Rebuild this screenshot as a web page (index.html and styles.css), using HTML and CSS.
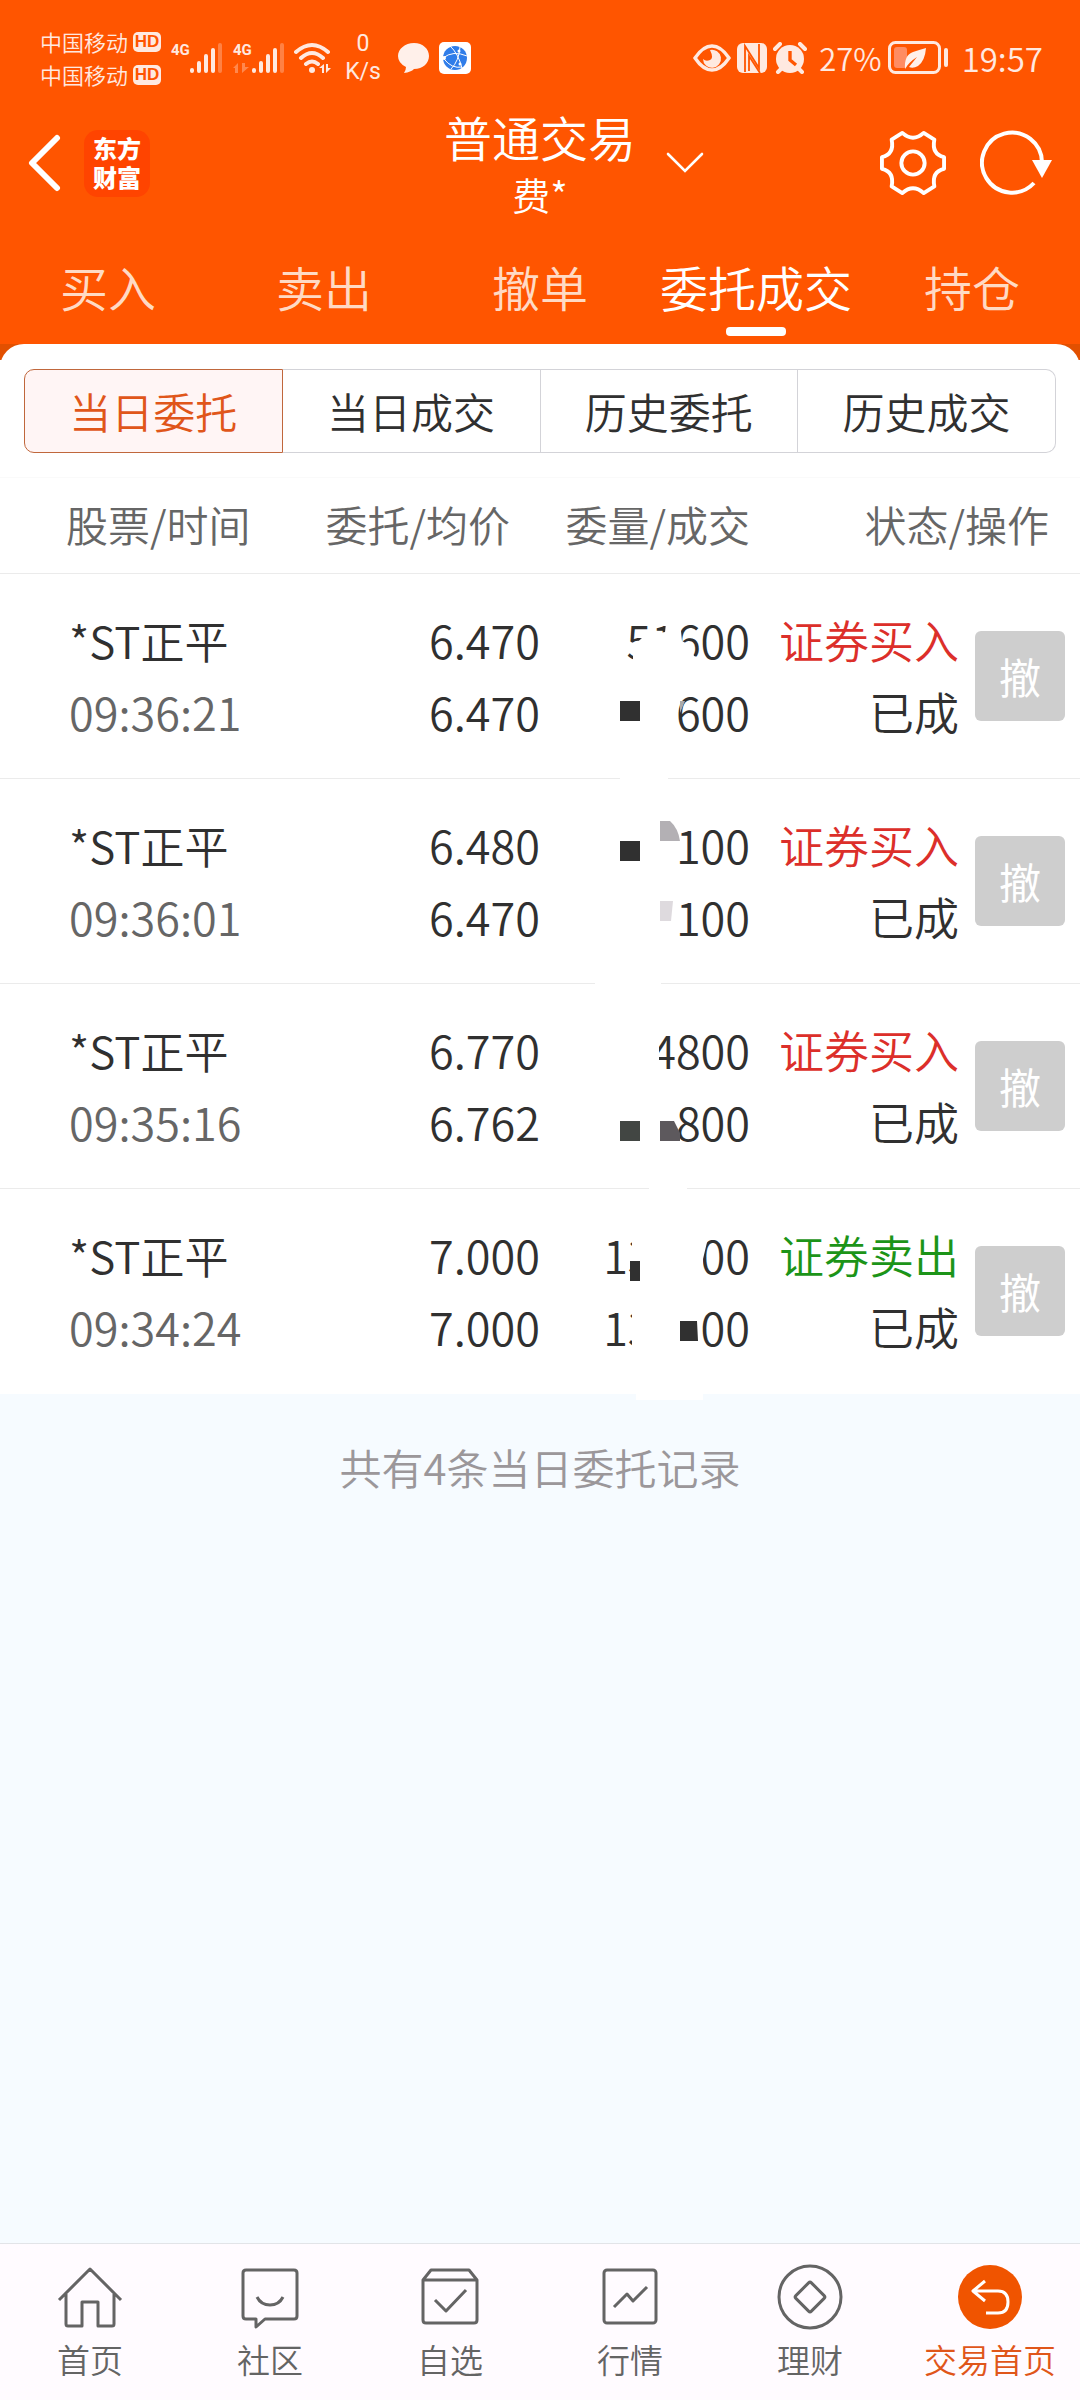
FILE: index.html
```html
<!DOCTYPE html>
<html lang="zh-CN">
<head>
<meta charset="utf-8">
<meta name="viewport" content="width=device-width">
<title>普通交易</title>
<link rel="stylesheet" href="styles.css">
</head>
<body>
<div class="app">
  <header class="header">
    <div class="status">
      <div class="carriers">
        <div class="carrier">中国移动<span class="hd">HD</span></div>
        <div class="carrier">中国移动<span class="hd">HD</span></div>
      </div>
      <div class="signal">
        <span class="gen">4G</span>
        <svg width="34" height="32" viewBox="0 0 34 32" stroke-width="4" stroke-linecap="round" stroke="#ffe9e0"><path d="M3 28v1M10 21v8M17 14v15M24 8v21"/><path d="M31 3v26" stroke-opacity=".3"/></svg>
      </div>
      <div class="signal">
        <span class="gen">4G<svg class="gen-arrows" width="16" height="10" viewBox="0 0 16 10" fill="#ffe9e0" fill-opacity=".35"><path d="M5 0v10H2V5H0zM9 0v10l7-6h-4V0z"/></svg></span>
        <svg width="34" height="32" viewBox="0 0 34 32" stroke-width="4" stroke-linecap="round" stroke="#ffe9e0"><path d="M3 28v1M10 21v8M17 14v15M24 8v21"/><path d="M31 3v26" stroke-opacity=".3"/></svg>
      </div>
      <svg class="wifi" width="38" height="32" viewBox="0 0 38 32" fill="none" stroke="#ffe9e0" stroke-width="4" stroke-linecap="round"><path d="M2 10Q18-4 34 10M7 16Q18 6 29 16M12 22Q18 17 24 22"/><circle cx="18" cy="28" r="3" fill="#ffe9e0" stroke="none"/><path d="M30 22v9h-2v-5h-3zM32 22v9l5-5h-3v-4z" fill="#ffe9e0" stroke="none"/></svg>
      <div class="rate"><span>0</span><span>K/s</span></div>
      <svg class="bubble" width="32" height="30" viewBox="0 0 32 30" fill="#fff0ea"><path d="M16 0c9 0 15 6 15 13s-6 13-15 13q-3 3-10 4 2-3 2-6-8-4-8-11C0 6 7 0 16 0z"/></svg>
      <svg width="32" height="32" viewBox="0 0 32 32"><rect width="32" height="32" rx="5" fill="#fff"/><circle cx="16" cy="16" r="12" fill="#2f7de9"/><path d="M11 4q8 7 12 22M4 16q10-8 24-2M5 17q8 10 18 8M12 27q8-8 9-22" fill="none" stroke="#fff" stroke-width="1"/><circle cx="5" cy="16" r="2" fill="#fff"/><circle cx="20" cy="9" r="1.5" fill="#fff"/><circle cx="21" cy="22" r="1.5" fill="#fff"/></svg>
      <div class="status-right">
        <svg width="38" height="28" viewBox="0 0 38 28"><path d="M2 14Q10 2 19 2t17 12q-8 12-17 12T2 14z" fill="none" stroke="#ffe9e0" stroke-width="3.4"/><path d="M17 6a9 9 0 1 1-7 9q3 3 7 1t0-10z" fill="#ffe9e0"/></svg>
        <svg width="30" height="30" viewBox="0 0 30 30"><rect width="30" height="30" rx="6" fill="#ffe9e0"/><path d="M8 29V3l14 22V1M8 4v25M12 28V13l11 17" fill="none" stroke="#ff5500" stroke-width="1.8"/></svg>
        <svg width="34" height="32" viewBox="0 0 34 32"><circle cx="17" cy="17" r="14" fill="#ffe9e0"/><path d="M2 7l5-5M32 7l-5-5M5 30l4-4M29 30l-4-4" stroke="#ffe9e0" stroke-width="4" stroke-linecap="round"/><path d="M17 9v9l6 5" fill="none" stroke="#ff5500" stroke-width="3.4"/></svg>
        <span class="percent">27%</span>
        <svg width="61" height="34" viewBox="0 0 61 34"><rect x="1.5" y="1.5" width="50" height="30" rx="6" fill="none" stroke="#ffe9e0" stroke-width="3"/><rect x="6" y="6" width="13" height="21" rx="3" fill="#ff8c62"/><path d="M17 28q-1-14 8-17 6-2 13-4-1 13-8 18-5 3-9 1l8-10q-8 5-12 12z" fill="#fff0ea"/><path d="M58 9v15" stroke="#ffe9e0" stroke-width="4" stroke-linecap="round"/></svg>
        <time class="clock">19:57</time>
      </div>
    </div>

    <div class="topbar">
      <div class="topbar-left">
        <button class="icon-button" aria-label="返回"><svg width="34" height="58" viewBox="0 0 34 58" fill="none" stroke="#fff" stroke-width="6" stroke-linecap="round" stroke-linejoin="round"><path d="M29 4L4 29l25 25"/></svg></button>
        <div class="logo">东方<br>财富</div>
      </div>
      <div class="titles"><h1 class="title">普通交易</h1><div class="subtitle">费*</div></div>
      <div class="topbar-right">
        <button class="icon-button" aria-label="切换账户"><svg width="38" height="22" viewBox="0 0 38 22" fill="none" stroke="#fff" stroke-width="2.6" stroke-linecap="round"><path d="M2 2l17 17L36 2"/></svg></button>
        <button class="icon-button push" aria-label="设置"><svg width="66" height="66" viewBox="0 0 68 66" fill="none" stroke="#fff" stroke-width="4" stroke-linejoin="round"><path d="M23 2Q34 12 45 2L56 9Q53 24 66 27V39Q53 42 56 57L45 64Q34 54 23 64L12 57Q15 42 2 39V27Q15 24 12 9Z"/><circle cx="34" cy="33" r="12"/></svg></button>
        <button class="icon-button" aria-label="刷新"><svg width="72" height="66" viewBox="0 0 72 66" fill="none" stroke="#fff" stroke-width="4"><path d="M54 53A30 30 0 1 1 62 33"/><path d="M52 30h20L62 48z" fill="#fff" stroke="none"/></svg></button>
      </div>
    </div>

    <nav class="tabs">
      <a class="tab" href="#">买入</a>
      <a class="tab" href="#">卖出</a>
      <a class="tab" href="#">撤单</a>
      <a class="tab tab-active" href="#" aria-current="page">委托成交</a>
      <a class="tab" href="#">持仓</a>
    </nav>
  </header>

  <main class="main">
    <div class="panel-back">
      <div class="segments">
        <button class="segment segment-active">当日委托</button>
        <button class="segment">当日成交</button>
        <button class="segment">历史委托</button>
        <button class="segment">历史成交</button>
      </div>
    </div>

    <table class="orders">
      <colgroup><col><col class="col-price"><col class="col-amount"><col class="col-state"><col class="col-action"></colgroup>
      <thead>
        <tr><th class="name-head">股票/时间</th><th class="price-head">委托/均价</th><th>委量/成交</th><th class="state-head" colspan="2">状态/操作</th></tr>
      </thead>
      <tbody>
        <tr>
          <td class="name">*ST正平<div class="time">09:36:21</div></td>
          <td>6.470<div>6.470</div></td>
          <td class="amount">51600<div>600</div>
            <svg class="cover" width="210" height="205" viewBox="0 0 210 205"><path fill="#fff" d="M102 64l-9 8h-4v6h4v12h68v-6l-7-2-3-10-9-5-1-10v-8h-15l-1 9-11 2zM80 203h48v3H80z"/><path fill="#303030" d="M80 127h20v20H80z"/><path fill="#aaa" d="M140 127h5l-5 12z"/></svg></td>
          <td><span class="buy">证券买入</span><div>已成</div></td>
          <td class="action"><button class="cancel">撤</button></td>
        </tr>
        <tr>
          <td class="name">*ST正平<div class="time">09:36:01</div></td>
          <td>6.480<div>6.470</div></td>
          <td class="amount">100<div>100</div>
            <svg class="cover" width="210" height="205" viewBox="0 0 210 205"><path fill="#fff" d="M55 203h66v3H55z"/><path fill="#303030" d="M80 62h20v20H80z"/><path fill="#b3b0b4" d="M120 42h10q8 7 10 20h-20z"/><path fill="#dedade" d="M120 122h13l-2 20h-11z"/></svg></td>
          <td><span class="buy">证券买入</span><div>已成</div></td>
          <td class="action"><button class="cancel">撤</button></td>
        </tr>
        <tr>
          <td class="name">*ST正平<div class="time">09:35:16</div></td>
          <td>6.770<div>6.762</div></td>
          <td class="amount">4800<div>800</div>
            <svg class="cover" width="210" height="205" viewBox="0 0 210 205"><path fill="#fff" d="M100 45h19v45h-19zM109 203h38v3h-38z"/><path fill="#424643" d="M80 137h20v20H80z"/><path fill="#5d595d" d="M120 137h14l6 12v8h-20z"/></svg></td>
          <td><span class="buy">证券买入</span><div>已成</div></td>
          <td class="action"><button class="cancel">撤</button></td>
        </tr>
        <tr>
          <td class="name">*ST正平<div class="time">09:34:24</div></td>
          <td>7.000<div>7.000</div></td>
          <td class="amount">13<span class="blank"></span>00<div>13<span class="blank"></span>00</div>
            <svg class="cover" width="210" height="205" viewBox="0 0 210 205"><path fill="#fff" d="M92 45h77l-6 25v10h-2v12H92zM92 120h48v40H92zM96 203h67v8H96z"/><path fill="#303030" d="M90 72h10v20H90zM140 132h17l1 20h-18z"/></svg></td>
          <td><span class="sell">证券卖出</span><div>已成</div></td>
          <td class="action"><button class="cancel">撤</button></td>
        </tr>
      </tbody>
    </table>
    <p class="summary">共有4条当日委托记录</p>
  </main>

  <nav class="bottom">
    <a class="nav-item" href="#"><svg width="66" height="66" viewBox="0 0 66 66"><path d="M2 36L33 5l31 31M9 30v30q0 2 2 2h14V38h16v24h14q2 0 2-2V30"/></svg>首页</a>
    <a class="nav-item" href="#"><svg width="66" height="66" viewBox="0 0 66 66"><path d="M9 6h48q3 0 3 3v43q0 3-3 3H28l-9 8v-8H9q-3 0-3-3V9q0-3 3-3zM20 33q4 8 13 8t13-8"/></svg>社区</a>
    <a class="nav-item" href="#"><svg width="66" height="66" viewBox="0 0 66 66"><path d="M6 16h54M6 16l8-10h38l8 10v40q0 3-3 3H9q-3 0-3-3zM18 36l11 11 20-21"/></svg>自选</a>
    <a class="nav-item" href="#"><svg width="66" height="66" viewBox="0 0 66 66"><rect x="7" y="6" width="52" height="53" rx="3"/><path d="M17 43l13-13 6 7 14-14"/></svg>行情</a>
    <a class="nav-item" href="#"><svg width="66" height="66" viewBox="0 0 66 66"><circle cx="33" cy="33" r="31"/><rect x="22" y="22" width="22" height="22" rx="2" transform="rotate(45 33 33)"/></svg>理财</a>
    <a class="nav-item nav-active" href="#" aria-current="page"><svg width="66" height="66" viewBox="0 0 66 66"><circle cx="33" cy="33" r="32" fill="#f05400" stroke="none"/><path stroke="#fff" d="M28 17L16 27l12 10M16 27h25q10 0 10 11t-10 11H29"/></svg>交易首页</a>
  </nav>
</div>
</body>
</html>
```
FILE: styles.css
```css
* { box-sizing: border-box; }
body { margin: 0; font-family: "Noto Sans CJK SC", sans-serif; font-weight: 350; color: #303030; background: #f6fbff; }
button { font: inherit; color: inherit; padding: 0; border: 0; background: none; }
a { color: inherit; text-decoration: none; }
svg { display: block; flex: none; }

.app { min-height: 100vh; display: flex; flex-direction: column; }
.header { background: #ff5500; color: #fff; }

.status { display: flex; align-items: center; height: 110px; padding: 6px 37px 0 40px; color: #ffe9e0; }
.carrier { display: flex; align-items: center; gap: 5px; font-size: 22px; line-height: 33px; }
.hd { width: 28px; border-radius: 5px; background: #ffe9e0; color: #ff5500; font: 700 17px/20px "Liberation Sans", sans-serif; text-align: center; }
.signal { display: flex; margin-left: 10px; }
.gen { width: 18px; font: 700 15px/16px "Roboto", sans-serif; }
.gen-arrows { margin-top: 5px; }
.wifi { margin-left: 9px; }
.rate { display: flex; flex-direction: column; align-items: center; width: 34px; margin: 0 18px 0 14px; font: 400 23px/28px "Roboto", sans-serif; }
.bubble { margin-right: 9px; }
.status-right { display: flex; align-items: center; gap: 6px; margin-left: auto; font-size: 33px; line-height: 40px; }
.percent { margin-left: 6px; font-size: 31px; }
.clock { margin-left: 7px; }

.topbar { display: grid; grid-template-columns: 1fr auto 1fr; height: 116px; padding: 0 28px; }
.topbar-left, .topbar-right { display: flex; align-items: center; padding-bottom: 10px; }
.topbar-left { gap: 22px; }
.topbar-right { gap: 34px; padding-left: 30px; }
.push { margin-left: auto; }
.logo { width: 66px; height: 67px; padding-top: 3px; border-radius: 14px; background: #ff4400; font-size: 24px; font-weight: 900; line-height: 29px; text-align: center; }
.titles { text-align: center; }
.title { margin: 0; font-size: 48px; font-weight: 350; line-height: 52px; }
.subtitle { font-size: 38px; line-height: 64px; }

.tabs { display: grid; grid-template-columns: repeat(5, 1fr); height: 118px; padding-top: 28px; }
.tab { display: flex; flex-direction: column; align-items: center; gap: 9px; font-size: 48px; line-height: 64px; color: #ffdac4; white-space: nowrap; }
.tab-active { color: #fff; }
.tab-active::after { content: ""; width: 60px; height: 9px; border-radius: 4px; background: #fff; }

.main { flex: 1; }
.panel-back { background: linear-gradient(#e25000 16px, #fff 16px); }
.segments { display: flex; padding: 25px 24px 24px; border-radius: 24px 24px 0 0; background: #fff; }
.segment { flex: 1; height: 84px; padding-bottom: 2px; border: 1px solid #d3d3d8; border-left-width: 0; font-size: 42px; background: #fff; }
.segment:first-child { border-left-width: 1px; border-radius: 10px 0 0 10px; }
.segment:last-child { border-radius: 0 10px 10px 0; }
.segment-active { border-color: #c0673c; background: #fff5f5; color: #e0561a; }

.orders { width: 100%; table-layout: fixed; border-collapse: separate; border-spacing: 0; background: #fff; text-align: right; }
.col-price { width: 216px; }
.col-amount { width: 210px; }
.col-state { width: 209px; }
.col-action { width: 121px; }
.orders th { height: 97px; padding: 0 0 3px; border-top: 1px solid #fafafa; border-bottom: 1px solid #ebebeb; font-size: 42px; font-weight: 350; line-height: 60px; color: #666; white-space: nowrap; }
.orders td { height: 205px; padding: 0 0 1px; border-bottom: 1px solid #ebebeb; font-size: 45px; line-height: 72px; white-space: nowrap; }
.orders tr:last-child td { border-bottom-color: #fff; }
.orders .name-head { padding-left: 66px; text-align: left; }
.orders .price-head { padding-right: 30px; }
.orders .state-head { padding-right: 31px; }
.orders .name { padding-left: 69px; font-size: 44px; text-align: left; }
.orders .amount { position: relative; }
.cover { position: absolute; top: 0; left: 0; overflow: visible; }
.blank { display: inline-block; width: 48px; }
.time { font-size: 45px; color: #666; }
.buy { color: #dc2f2a; }
.sell { color: #1c9418; }
.orders .action { padding-right: 15px; }
.cancel { width: 90px; height: 90px; border-radius: 6px; background: #cecece; color: #fff; font-size: 42px; font-weight: 400; line-height: 84px; vertical-align: middle; }
.summary { margin: 0; padding: 43px 0; text-align: center; font-size: 42px; line-height: 60px; color: #9b979a; }

.bottom { display: grid; grid-template-columns: repeat(6, 1fr); height: 157px; padding-top: 20px; border-top: 1px solid #e2e4e8; background: #fffbff; color: #646464; font-size: 33px; line-height: 54px; }
.nav-item { display: flex; flex-direction: column; align-items: center; gap: 2px; white-space: nowrap; }
.nav-item svg { fill: none; stroke: #646464; stroke-width: 3; stroke-linejoin: round; }
.nav-active { color: #e0561a; }
```
